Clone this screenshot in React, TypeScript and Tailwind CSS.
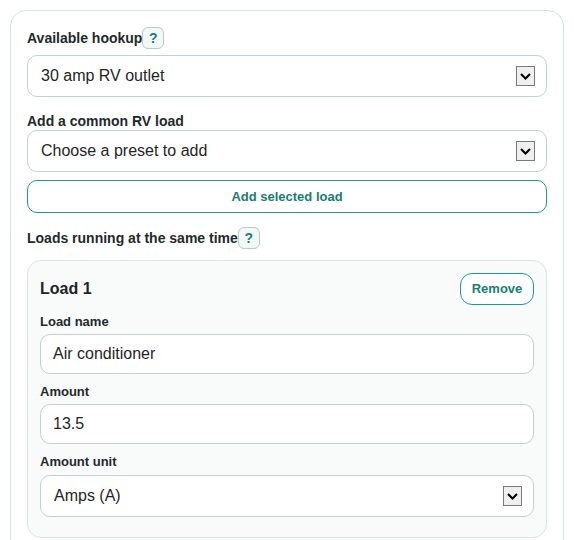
import React, { useState } from 'react';

const font = { fontFamily: '"Liberation Sans", Arial, sans-serif' };

const HelpButton = () => (
  <button
    type="button"
    className="flex h-[22px] w-[22px] items-center justify-center rounded-md border border-[#b8cbc6] bg-[#f2f8f6] text-[14px] font-bold leading-none text-[#17806f]"
  >
    ?
  </button>
);

interface SelectProps {
  value: string;
  onChange: (v: string) => void;
  options: { value: string; label: string }[];
}

// native select with the old-style grey arrow box drawn on top
const Select = ({ value, onChange, options }: SelectProps) => (
  <div className="relative">
    <select
      className="block h-[42px] w-full appearance-none rounded-[10px] border border-[#c3d2ce] bg-white pl-[13px] pr-10 text-[16px] text-[#1f2525] outline-none"
      value={value}
      onChange={(e) => onChange(e.target.value)}
    >
      {options.map((o) => (
        <option key={o.value} value={o.value}>
          {o.label}
        </option>
      ))}
    </select>
    <span className="pointer-events-none absolute right-3 top-1/2 flex h-5 w-[19px] -translate-y-1/2 items-center justify-center border border-[#7a7a7a] bg-[#efefef]">
      <svg width="11" height="7" viewBox="0 0 11 7" fill="none">
        <path d="M1 1l4.5 4.5L10 1" stroke="#000" strokeWidth="2" />
      </svg>
    </span>
  </div>
);

const inputCls =
  'block h-10 w-full rounded-[10px] border border-[#c3d2ce] bg-white px-3 text-[16px] text-[#1f2525] outline-none';

const App = () => {
  const [hookup, setHookup] = useState('30');
  const [preset, setPreset] = useState('');
  const [name, setName] = useState('Air conditioner');
  const [amount, setAmount] = useState('13.5');
  const [unit, setUnit] = useState('amps');

  return (
    <div className="min-h-[560px] bg-white p-2.5" style={font}>
      <div className="rounded-2xl border border-[#d6e3df] bg-white px-4 pb-6 pt-4">
        <div className="mb-1.5 flex items-center text-[14px] font-bold text-[#1e2a2a]">
          Available hookup
          <HelpButton />
        </div>
        <Select
          value={hookup}
          onChange={setHookup}
          options={[
            { value: '30', label: '30 amp RV outlet' },
            { value: '50', label: '50 amp RV outlet' },
            { value: '15', label: '15 amp household outlet' },
          ]}
        />

        <label className="mb-px mt-4 block text-[14px] font-bold leading-4 text-[#1e2a2a]">
          Add a common RV load
        </label>
        <Select
          value={preset}
          onChange={setPreset}
          options={[
            { value: '', label: 'Choose a preset to add' },
            { value: 'ac', label: 'Air conditioner' },
            { value: 'micro', label: 'Microwave' },
            { value: 'fridge', label: 'Refrigerator' },
          ]}
        />

        <button
          type="button"
          className="mt-2 h-[33px] w-full rounded-[10px] border border-[#1f9c84] bg-white text-[13px] font-bold text-[#16806e]"
        >
          Add selected load
        </button>

        <div className="mb-[11px] mt-[14px] flex items-center text-[14px] font-bold text-[#1e2a2a]">
          Loads running at the same time
          <HelpButton />
        </div>

        <div className="rounded-[14px] border border-[#d9e5e2] bg-[#f9fbfb] px-3 pb-5 pt-3">
          <div className="flex items-center justify-between">
            <h3 className="text-[16px] font-bold text-[#1e2424]">Load 1</h3>
            <button
              type="button"
              className="h-8 w-[74px] rounded-xl border border-[#1f9c84] bg-white text-[13px] font-bold text-[#16806e]"
            >
              Remove
            </button>
          </div>

          <div className="mt-[9px]">
            <label className="mb-[5px] block text-[13px] font-bold leading-[15px] text-[#1e2a2a]">Load name</label>
            <input className={inputCls} value={name} onChange={(e) => setName(e.target.value)} />
          </div>

          <div className="mt-2.5">
            <label className="mb-[5px] block text-[13px] font-bold leading-[15px] text-[#1e2a2a]">Amount</label>
            <input className={inputCls} value={amount} onChange={(e) => setAmount(e.target.value)} />
          </div>

          <div className="mt-2.5">
            <label className="mb-[6px] block text-[13px] font-bold leading-[15px] text-[#1e2a2a]">Amount unit</label>
            <Select
              value={unit}
              onChange={setUnit}
              options={[
                { value: 'amps', label: 'Amps (A)' },
                { value: 'watts', label: 'Watts (W)' },
              ]}
            />
          </div>
        </div>
      </div>
    </div>
  );
};

export default App;
